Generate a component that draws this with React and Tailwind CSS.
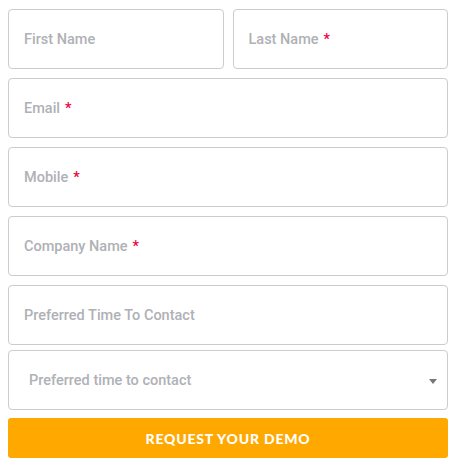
export default function App() {
  const field =
    "h-[60px] w-full rounded-[4px] border border-[#cccccc] bg-white px-[15px] pt-[2px] flex items-center text-[14.5px] font-medium text-[#afb1b6]";
  const Req = () => <span className="ml-[5px] text-[#f0003c]">*</span>;
  return (
    <div className="w-[458px] h-[470px] bg-white pt-[9px] px-[8px] pr-[10px]" style={{ fontFamily: "Roboto, 'Noto Sans', sans-serif" }}>
      <div className="flex flex-col gap-[9px]">
        <div className="flex gap-[9px]">
          <div className={field}>First Name</div>
          <div className={field}>
            Last Name<Req />
          </div>
        </div>
        <div className={field}>
          Email<Req />
        </div>
        <div className={field}>
          Mobile<Req />
        </div>
        <div className={field}>
          Company Name<Req />
        </div>
        <div className={field}>Preferred Time To Contact</div>
      </div>
      <div className="mt-[5px] h-[60px] w-full rounded-[4px] border border-[#cccccc] bg-white pl-[20px] pr-[10px] pt-[2px] flex items-center justify-between text-[14.5px] font-medium text-[#afb1b6]">
        <span>Preferred time to contact</span>
        <svg width="8" height="5" viewBox="0 0 8 5"><path d="M0 0h8L4 5z" fill="#777" /></svg>
      </div>
      <button className="mt-[8px] h-[40px] w-full rounded-[3px] bg-[#ffa800] text-white text-[14px] font-black uppercase tracking-[0.8px] flex items-center justify-center" style={{ fontFamily: "Lato, sans-serif" }}>
        Request your demo
      </button>
    </div>
  );
}
